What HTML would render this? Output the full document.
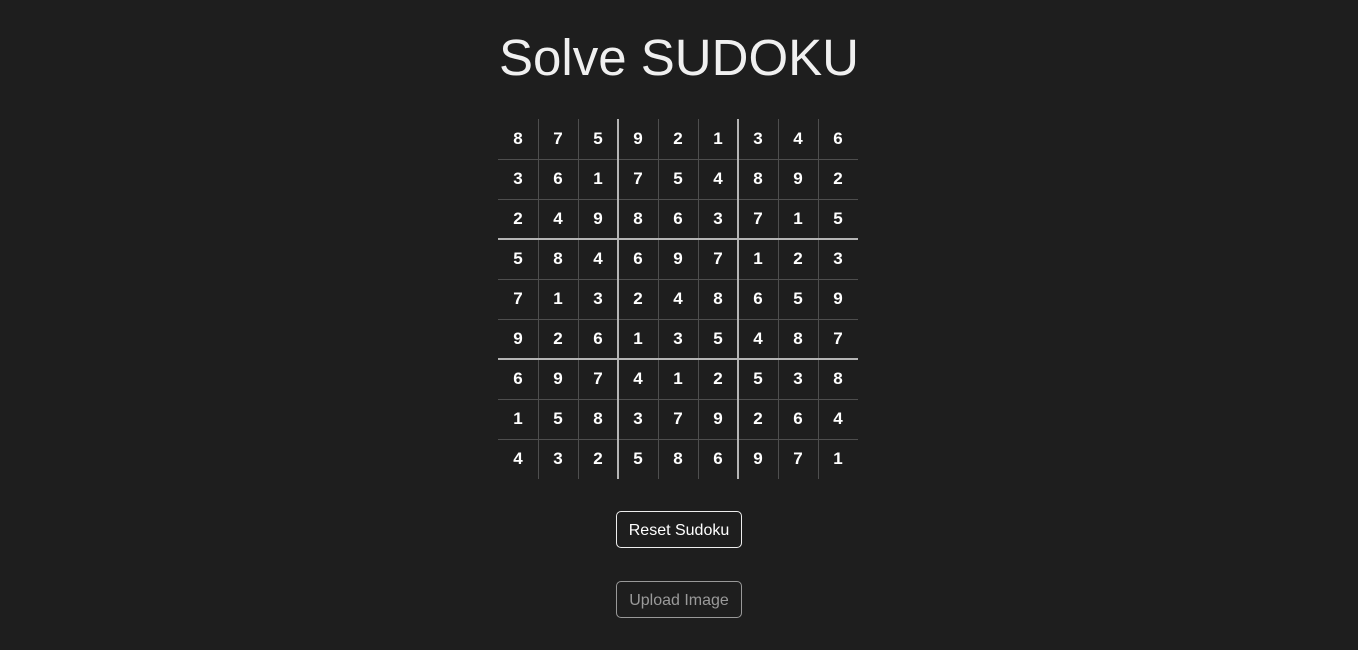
<!DOCTYPE html>
<html><head><style>
html,body{margin:0;padding:0;background:#1e1e1e;width:1358px;height:650px;overflow:hidden;font-family:"Liberation Sans",Arial,sans-serif}
h1{position:absolute;top:28px;left:0;width:1358px;text-align:center;margin:0;font-weight:normal;font-size:51px;color:#f0f0f0;line-height:60px}
#g{position:absolute;left:498px;top:119px;width:360px;height:360px}
.c{position:absolute;width:40px;height:40px;line-height:40px;text-align:center;color:#fff;font-weight:bold;font-size:17px}
.l{position:absolute;background:#4e4e4e}
.t{position:absolute;background:#b5b5b5}
.b{position:absolute;left:616px;width:124px;height:35px;border:1px solid #eee;border-radius:5px;color:#fff;font-size:16px;text-align:center;line-height:37px}
</style></head><body>
<h1>Solve SUDOKU</h1>
<div id="g"></div>
<div class="b" style="top:511px">Reset Sudoku</div>
<div class="b" style="top:581px;border-color:#999;color:#9a9a9a">Upload Image</div>
<script>
var s="875921346361754892249863715584697123713248659926135487697412538158379264432586971";
var g=document.getElementById('g'),h='';
for(var i=1;i<9;i++){
 if(i%3){h+='<div class="l" style="left:'+(i*40)+'px;top:0;width:1px;height:360px"></div><div class="l" style="top:'+(i*40)+'px;left:0;height:1px;width:360px"></div>';}
}
for(var i=3;i<9;i+=3){h+='<div class="t" style="left:'+(i*40-1)+'px;top:0;width:2px;height:360px"></div><div class="t" style="top:'+(i*40-1)+'px;left:0;height:2px;width:360px"></div>';}
for(var r=0;r<9;r++)for(var c=0;c<9;c++)h+='<div class="c" style="left:'+(c*40)+'px;top:'+(r*40)+'px">'+s[r*9+c]+'</div>';
g.innerHTML=h;
</script>
</body></html>
